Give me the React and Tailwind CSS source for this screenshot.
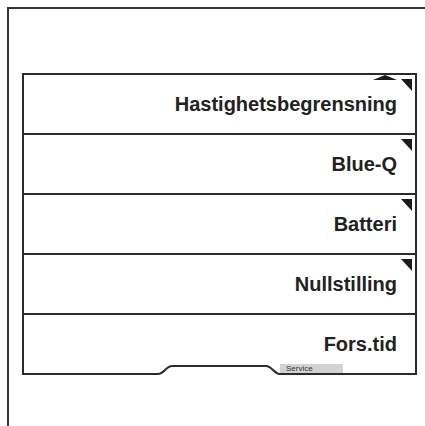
const rows = [
  { label: "Hastighetsbegrensning", corner: true, scroll: true },
  { label: "Blue-Q", corner: true },
  { label: "Batteri", corner: true },
  { label: "Nullstilling", corner: true },
  { label: "Fors.tid", corner: false },
];

function Corner() {
  return (
    <svg className="absolute top-[4px] right-[3px]" width="11" height="12" viewBox="0 0 11 12">
      <polygon points="0,0 11,0 11,12" fill="#1a1a1a" />
    </svg>
  );
}

function ScrollUp() {
  return (
    <svg className="absolute top-0 right-[18px]" width="24" height="5" viewBox="0 0 24 5">
      <polygon points="0,5 12,0 24,5" fill="#1a1a1a" />
    </svg>
  );
}

export default function App() {
  return (
    <div className="h-screen w-full overflow-hidden bg-white pl-[7px] pt-[7px]" style={{ fontFamily: "'Liberation Sans', Arial, sans-serif" }}>
      <div className="h-[440px] w-[440px] border-l-2 border-t-2 border-[#333]">
        <div className="relative ml-[13px] mt-[64px] w-[395px] border-x-2 border-t-2 border-[#2a2a2a] pb-[2px]">
          {rows.map((r, i) => (
            <div
              key={r.label}
              className={`relative flex h-[58px] items-center justify-end pr-[18px] ${i < rows.length - 1 ? "box-content border-b-2 border-[#2a2a2a]" : ""}`}
            >
              {r.scroll && <ScrollUp />}
              {r.corner && <Corner />}
              <span className="text-[20px] font-bold text-[#222]">{r.label}</span>
            </div>
          ))}

          {/* bottom edge with tab */}
          <svg className="absolute bottom-0 left-[-2px]" width="395" height="12" viewBox="0 0 395 12">
            <path
              d="M0 11 L136 11 C142 11 144 3 150 3 L244 3 C250 3 252 11 258 11 L395 11"
              fill="none"
              stroke="#2a2a2a"
              strokeWidth="2"
            />
          </svg>
          <div className="absolute bottom-[2px] left-[256px] flex h-[9px] w-[63px] items-center bg-[#d2d2d2] pl-[6px] text-[8px] leading-none text-[#333]">
            Service
          </div>
        </div>
      </div>
    </div>
  );
}
